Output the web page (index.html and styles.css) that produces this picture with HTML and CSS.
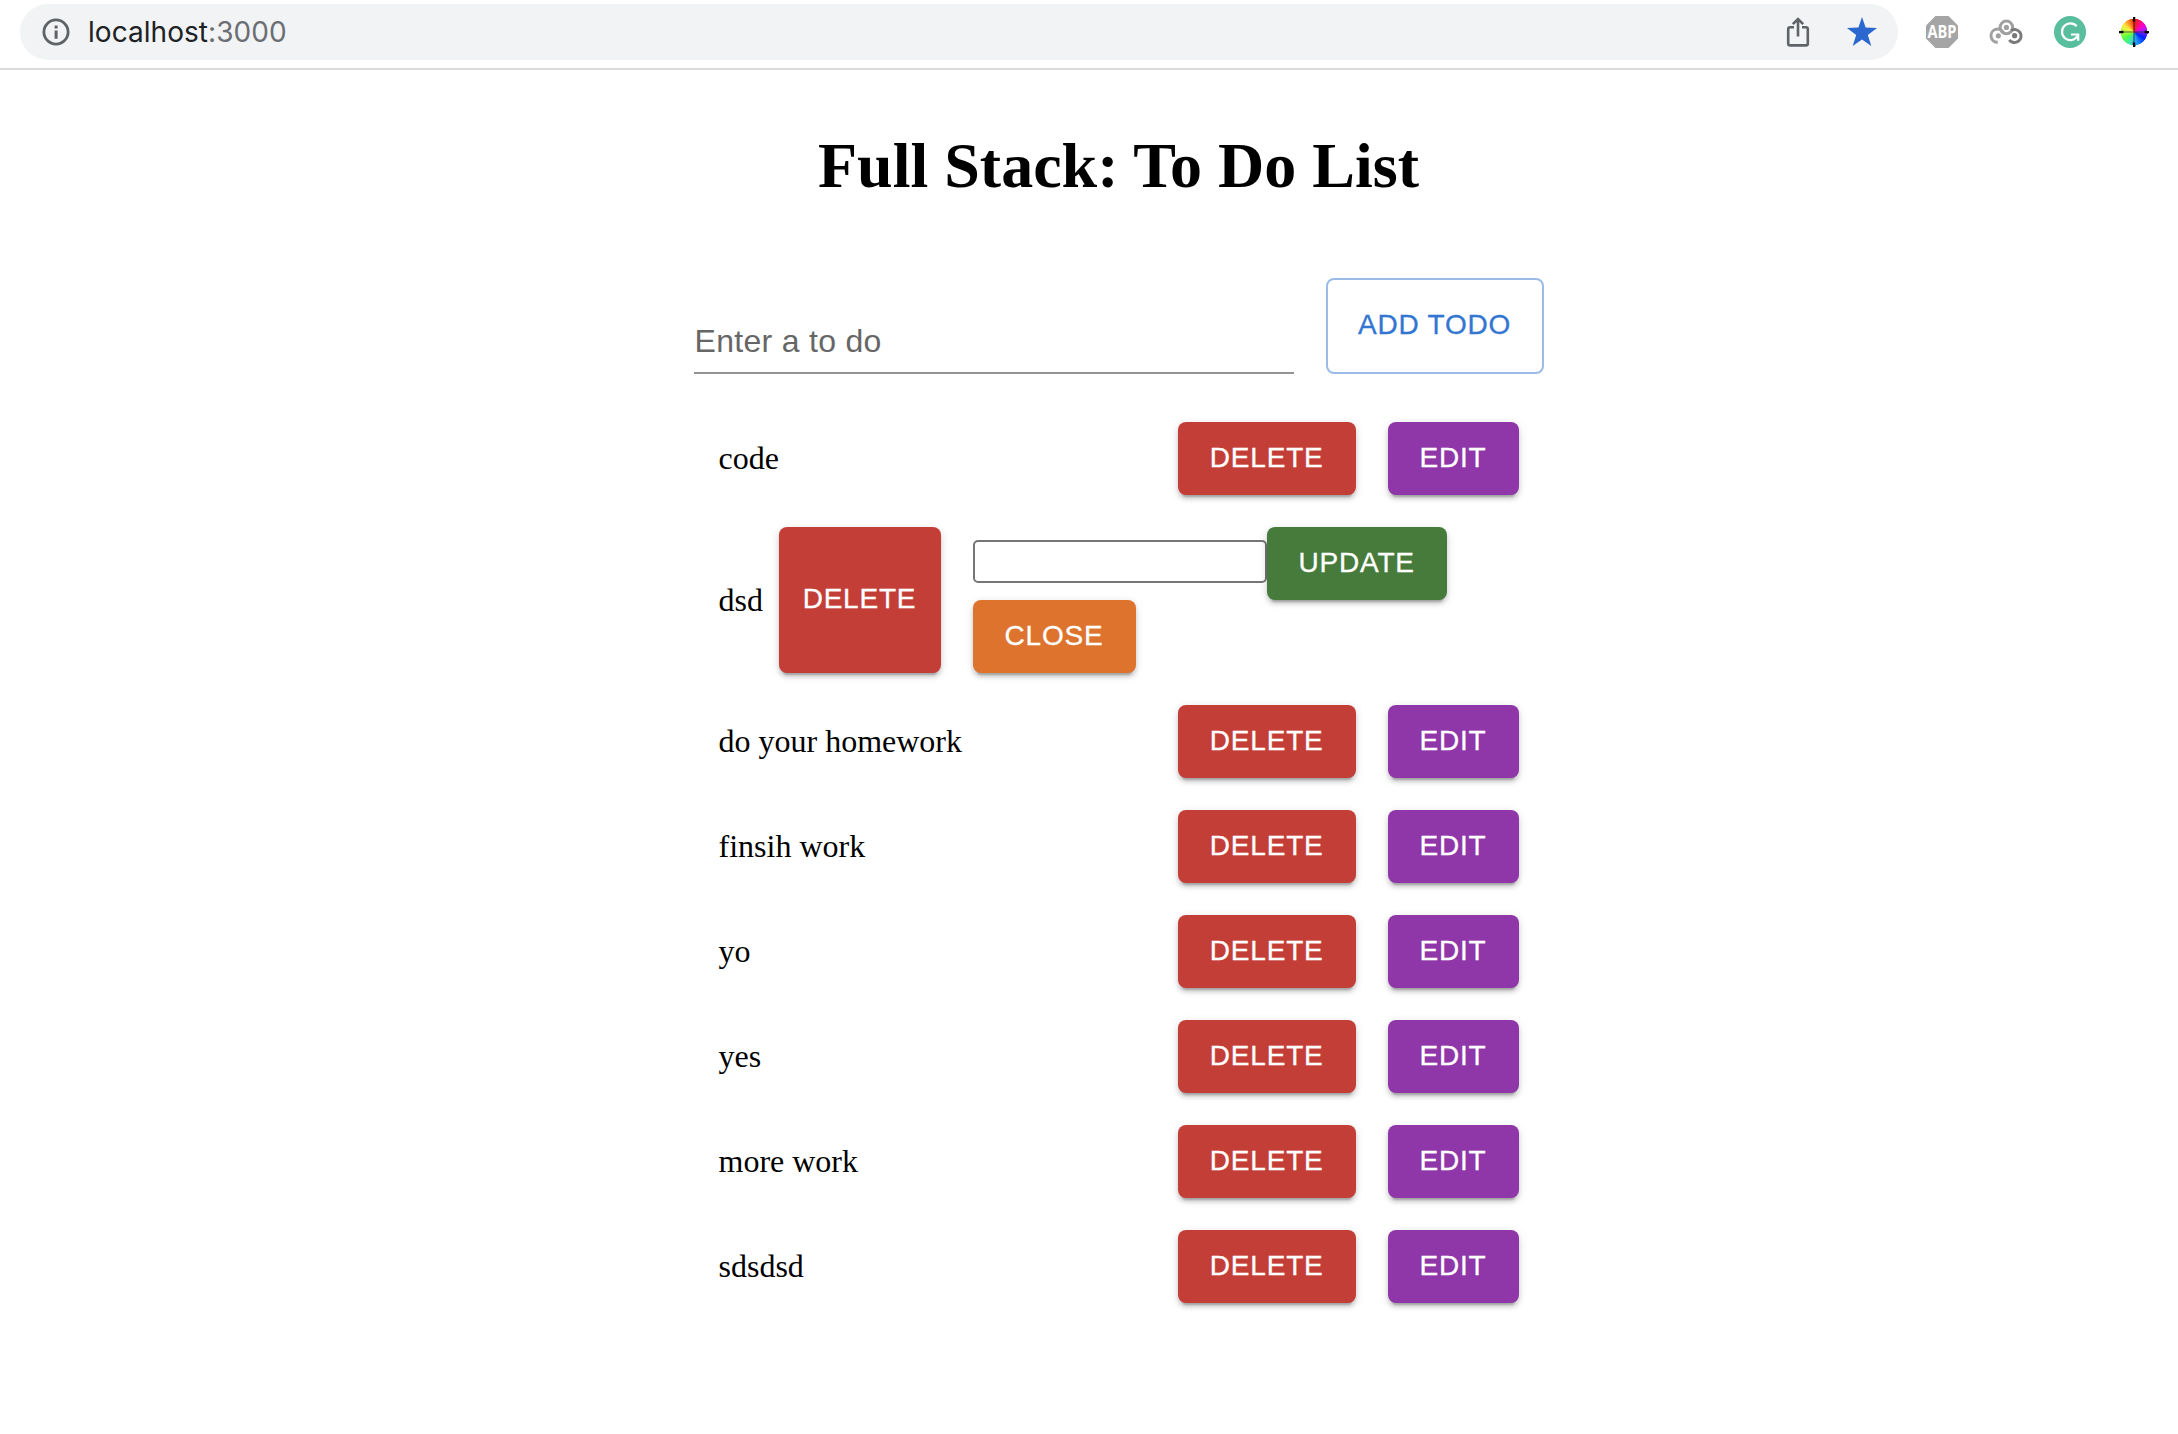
FILE: index.html
```html
<!DOCTYPE html>
<html lang="en">
<head>
<meta charset="utf-8">
<title>Full Stack: To Do List</title>
<link rel="stylesheet" href="styles.css">
</head>
<body>
<header class="toolbar">
  <div class="address">
    <svg class="info" width="28" height="28" viewBox="0 0 28 28"><circle cx="14" cy="14" r="12.1" fill="none" stroke="#5f6368" stroke-width="2.8"/><path d="M12.6 7.5h3v3h-3zM12.6 12.6h3v8.2h-3z" fill="#5f6368"/></svg>
    <span class="url">localhost<span class="port">:3000</span></span>
    <svg class="share" width="24" height="32" viewBox="0 0 24 32" fill="none" stroke="#5f6368" stroke-width="2.6"><path d="M8 11.2H4.200a2 2 0 0 0-2 2v14.200a2 2 0 0 0 2 2h15.600a2 2 0 0 0 2-2V13.200a2 2 0 0 0-2-2H16M12 20.500V4M6.800 8.200 12 3l5.200 5.200"/></svg>
    <svg class="star" width="30" height="29" viewBox="0 0 30 29"><path d="M15 0l3.600 10.400L30 11l-9.200 6.900L24.300 29 15 22.600 5.700 29l3.500-11.100L0 11l11.400-.6z" fill="#2a67cf"/></svg>
  </div>
  <div class="extensions">
    <svg width="32" height="32" viewBox="0 0 32 32"><path d="M9.400 0h13.200L32 9.400v13.200L22.600 32H9.400L0 22.600V9.400z" fill="#a5a5a5"/><text class="abp" x="16" y="22.300" text-anchor="middle" textLength="29" lengthAdjust="spacingAndGlyphs">ABP</text></svg>
    <svg width="32" height="32" viewBox="0 0 32 32" fill="none" stroke-width="3"><circle cx="16.400" cy="11.400" r="6.300" stroke="#a0a0a0"/><path d="M7.800 26.300a6.600 6.600 0 1 1 5.800-9.300" stroke="#a0a0a0"/><path d="M21 14.600a6.500 6.500 0 1 1-1.700 9.200" stroke="#7b7b7b"/><circle cx="16.400" cy="11.400" r="2.600" fill="#a0a0a0" stroke="none"/><circle cx="8.300" cy="19.800" r="2.600" fill="#a0a0a0" stroke="none"/><circle cx="24.600" cy="19.700" r="2.600" fill="#777" stroke="none"/></svg>
    <svg width="32" height="32" viewBox="0 0 32 32"><circle cx="16" cy="16" r="16" fill="#58be9e"/><path d="M22.700 10.200a8.400 8.400 0 1 0 .8 10M17 18.500h7.200v6.200" fill="none" stroke="#fff" stroke-width="2.200"/></svg>
    <div class="wheel"><svg width="32" height="32" viewBox="0 0 32 32"><path d="M16 1v30M1 16h30" stroke="#222" stroke-opacity=".7" stroke-width="1.200"/><path d="M16 1v4.500M16 26.500v4.500M1 16h4.500M26.500 16h4.500" stroke="#000" stroke-width="2.500"/></svg></div>
  </div>
</header>
<main class="page">
  <h1 class="title">Full Stack: To Do List</h1>
  <form class="add">
    <input class="field" type="text" placeholder="Enter a to do">
    <button class="btn outlined" type="button">ADD TODO</button>
  </form>
  <div class="list">
    <div class="row"><span class="task">code</span><button class="btn red">DELETE</button><button class="btn purple">EDIT</button></div>
    <div class="row editing"><span class="task">dsd</span><button class="btn red">DELETE</button><div class="editor"><input class="edit-field" type="text"><button class="btn green">UPDATE</button><button class="btn orange">CLOSE</button></div></div>
    <div class="row"><span class="task">do your homework</span><button class="btn red">DELETE</button><button class="btn purple">EDIT</button></div>
    <div class="row"><span class="task">finsih work</span><button class="btn red">DELETE</button><button class="btn purple">EDIT</button></div>
    <div class="row"><span class="task">yo</span><button class="btn red">DELETE</button><button class="btn purple">EDIT</button></div>
    <div class="row"><span class="task">yes</span><button class="btn red">DELETE</button><button class="btn purple">EDIT</button></div>
    <div class="row"><span class="task">more work</span><button class="btn red">DELETE</button><button class="btn purple">EDIT</button></div>
    <div class="row"><span class="task">sdsdsd</span><button class="btn red">DELETE</button><button class="btn purple">EDIT</button></div>
  </div>
</main>
</body>
</html>
```
FILE: styles.css
```css
* { box-sizing: border-box; }
body {
  margin: 0;
  height: 1434px;
  overflow: hidden;
  background: #fff;
  color: #000;
  font-family: "Liberation Serif", "Times New Roman", serif;
  font-size: 32px;
}
svg { display: block; flex: none; overflow: visible; }

.toolbar {
  display: flex;
  height: 70px;
  padding: 4px 28px 8px 20px;
  border-bottom: 2px solid #d9dadc;
  justify-content: space-between;
}
.address {
  display: flex;
  align-items: center;
  width: 1878px;
  height: 56px;
  padding: 0 21px 0 22px;
  border-radius: 28px;
  background: #f1f3f4;
}
.url {
  margin-left: 18px;
  font: 28px/40px Inter, sans-serif;
  letter-spacing: .05px;
  color: #202124;
}
.port { color: #6b6e72; }
.share { margin-left: auto; }
.star { margin: 0 0 1px 37px; }
.extensions {
  display: flex;
  align-items: center;
  gap: 32px;
  height: 56px;
}
.abp { font: bold 18px "Open Sans", sans-serif; fill: #fff; }
.wheel {
  width: 32px;
  height: 32px;
  background: conic-gradient(#f02010, #f0c 50deg, #a020ff 80deg, #0020ff 120deg, #20a0ff 170deg, #40e0c0 200deg, #50ff40 240deg, #b0ff40 270deg, #ffe840 305deg, #ff8020 335deg, #f02010) center / 27px 27px no-repeat;
  -webkit-mask: radial-gradient(circle, #000 13px, transparent 13.6px), linear-gradient(#000, #000) center / 3px 30px no-repeat, linear-gradient(#000, #000) center / 30px 3px no-repeat;
}

.page {
  display: flex;
  flex-direction: column;
  align-items: center;
  width: 2237px;
  padding-top: 59px;
}
.title {
  margin: 0;
  font-size: 64px;
  line-height: 74px;
}
.add {
  display: flex;
  gap: 32px;
  width: 850px;
  height: 96px;
  margin-top: 75px;
}
.field {
  width: 600px;
  padding: 32px 0 0 1px;
  border: 0;
  border-bottom: 2px solid #949494;
  border-radius: 0;
  background: none;
  font: 32px/46px "Liberation Sans", Arial, sans-serif;
  letter-spacing: .3px;
}
.field::placeholder { color: #666; opacity: 1; }
.btn {
  flex: none;
  height: 73px;
  padding: 11px 32px 13px;
  border: 0;
  border-radius: 8px;
  color: #fff;
  font: 28px/49px "Liberation Sans", Arial, sans-serif;
  letter-spacing: .8px;
  -webkit-text-stroke: .3px currentColor;
  white-space: nowrap;
  box-shadow: 0 6px 2px -4px rgba(0,0,0,.2), 0 4px 4px rgba(0,0,0,.14), 0 2px 10px rgba(0,0,0,.12);
}
.outlined {
  width: 218px;
  height: 96px;
  padding: 8px 0 11px;
  border: 2px solid #9bbbe8;
  background: #fff;
  color: #3276d2;
  box-shadow: none;
}
.red { background: #c43e38; }
.purple { background: #8f37a8; }
.green { background: #467b3b; }
.orange { background: #dd732d; }
.list {
  display: flex;
  flex-direction: column;
  gap: 32px;
  width: 800px;
  margin-top: 48px;
}
.row { display: flex; align-items: center; }
.task { flex: 1; line-height: 37px; }
.row > .purple { margin-left: 32px; }
.editing { align-items: stretch; }
.editing .task { flex: none; width: 60px; align-self: center; }
.editing > .red { width: 162px; height: 146px; padding: 11px 0 14px; }
.editor {
  display: flex;
  flex-wrap: wrap;
  align-items: center;
  width: 530px;
  margin-left: 32px;
}
.edit-field {
  width: 294px;
  height: 43px;
  margin: 0 0 4px;
  padding: 2px 4px;
  border: 2px solid #767676;
  border-radius: 5px;
  background: #fff;
}
.editor .orange { width: 163px; margin-right: 200px; }
```
